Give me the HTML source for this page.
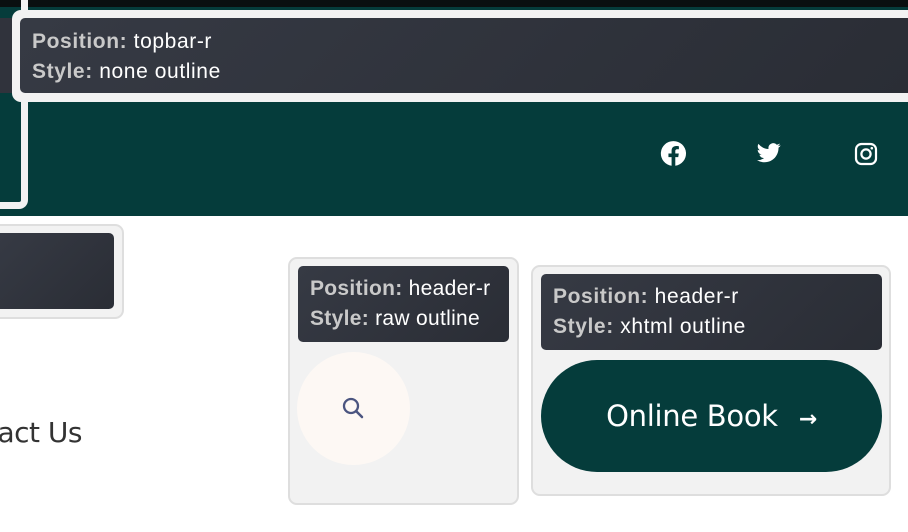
<!DOCTYPE html>
<html><head><meta charset="utf-8"><style>
*{margin:0;padding:0;box-sizing:border-box}
html,body{width:908px;height:532px;overflow:hidden}
body{background:#fff;font-family:"Liberation Sans",Arial,sans-serif}
#w{position:relative;width:908px;height:532px;overflow:hidden}
.abs{position:absolute}
.lbl{background:linear-gradient(135deg,#363a44,#2a2d35);border-radius:5px;color:#fff;font-size:21px;letter-spacing:0.6px;line-height:30px;padding:9px 12px;white-space:nowrap;overflow:hidden}
.lbl b{color:#c9c9c9}
.box{border:2px solid #dedede;background:#f2f2f2;border-radius:9px}
</style></head><body><div id="w">
<div class="abs" style="left:0;top:0;width:908px;height:7px;background:#0a0f10"></div>
<div class="abs" style="left:0;top:7px;width:908px;height:209px;background:#053c3b"></div>
<div class="abs" style="left:0;top:0;width:28px;height:209px;border:7px solid #f2f2f2;border-left:none;border-top:none;border-radius:0 0 9px 0"></div>
<div class="abs" style="left:0;top:18px;width:20px;height:75px;background:#30333c"></div>
<div class="abs" style="left:12px;top:10px;width:896px;height:92px;background:#f2f2f2;border-radius:9px 0 0 9px"></div>
<div class="abs lbl" style="left:20px;top:18px;width:888px;height:75px;padding-top:9px;border-radius:5px 0 0 5px"><b>Position:</b> topbar-r<br><b>Style:</b> none outline</div>
<svg class="abs" style="left:660px;top:140px" width="27" height="27" viewBox="0 0 24 24"><path fill="#fff" d="M12 1a11 11 0 0 0-1.7 21.9v-7.7H7.5V12h2.8V9.6c0-2.8 1.6-4.3 4.1-4.3 1.2 0 2.400.2 2.400.2v2.7h-1.4c-1.4 0-1.8.8-1.8 1.7V12h3.1l-.5 3.2h-2.6v7.7A11 11 0 0 0 12 1z"/></svg>
<svg class="abs" style="left:757px;top:142px" width="24" height="22" viewBox="0 0 24 20"><path fill="#fff" d="M23.6 2.4c-.9.4-1.8.6-2.8.8a4.8 4.8 0 0 0 2.1-2.7c-.9.6-2 1-3.1 1.2A4.9 4.9 0 0 0 11.5 6 13.9 13.9 0 0 1 1.4.9 4.9 4.9 0 0 0 2.9 7.4c-.8 0-1.6-.2-2.2-.6 0 2.4 1.7 4.4 3.9 4.8-.7.2-1.5.2-2.2.1.6 2 2.4 3.4 4.6 3.4A9.8 9.8 0 0 1 0 17.1 13.9 13.9 0 0 0 7.5 19.3c9 0 14-7.5 14-14v-.6c1-.7 1.8-1.5 2.1-2.3z"/></svg>
<svg class="abs" style="left:854px;top:142px" width="24" height="24" viewBox="0 0 24 24"><rect x="2" y="2" width="20" height="20" rx="5.5" fill="none" stroke="#fff" stroke-width="2.2"/><circle cx="12" cy="12" r="4.6" fill="none" stroke="#fff" stroke-width="2.2"/><circle cx="17.8" cy="6.2" r="1.3" fill="#fff"/></svg>
<div class="abs box" style="left:0;top:224px;width:124px;height:95px;border-left:none;border-radius:0 9px 9px 0"></div>
<div class="abs" style="left:0;top:233px;width:114px;height:76px;background:linear-gradient(135deg,#363a44,#2a2d35);border-radius:0 5px 5px 0"></div>
<div class="abs" style="left:0;top:416px;width:82px;height:40px;overflow:hidden"><div class="abs" style="right:0;top:0;font-family:'DejaVu Sans','Liberation Sans',sans-serif;font-size:28px;color:#333;white-space:nowrap;letter-spacing:-0.5px">Contact Us</div></div>
<div class="abs box" style="left:288px;top:257px;width:231px;height:248px"></div>
<div class="abs lbl" style="left:298px;top:266px;width:211px;height:76px;padding:8px 12px;letter-spacing:0.3px"><b>Position:</b> header-r<br><b>Style:</b> raw outline</div>
<div class="abs" style="left:297px;top:352px;width:113px;height:113px;border-radius:50%;background:#fdf8f4"></div>
<svg class="abs" style="left:339px;top:394px" width="28" height="28" viewBox="0 0 28 28"><circle cx="12" cy="12" r="7" fill="none" stroke="#4b5580" stroke-width="2.3"/><path d="M17 17l6 6" stroke="#4b5580" stroke-width="2.5" stroke-linecap="round"/></svg>
<div class="abs box" style="left:531px;top:265px;width:360px;height:231px"></div>
<div class="abs lbl" style="left:541px;top:274px;width:341px;height:76px;padding:8px 12px"><b>Position:</b> header-r<br><b>Style:</b> xhtml outline</div>
<div class="abs" style="left:541px;top:360px;width:341px;height:112px;border-radius:56px;background:#053c3b;color:#fff;font-family:'DejaVu Sans','Liberation Sans',sans-serif;font-size:29px;line-height:112px;text-align:center;letter-spacing:-0.3px">Online Book <span style="font-size:22px;font-weight:bold;margin-left:12px">→</span></div>
</div></body></html>
